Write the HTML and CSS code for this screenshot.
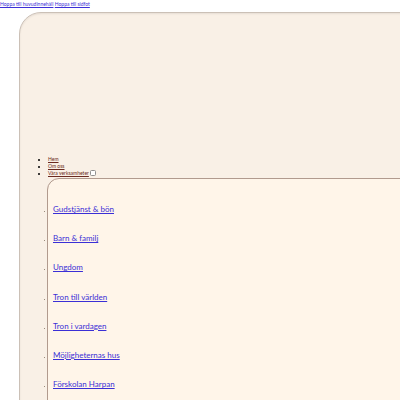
FILE: index.html
```html
<!DOCTYPE html>
<html lang="sv">
<head>
    <meta charset="UTF-8" />
    <meta name="viewport" content="width=device-width, initial-scale=1">
    <title>Församlingen</title>
    <link rel="stylesheet" href="styles.css">
</head>
<body>
<div class="skip">
    <a href="#main">Hoppa till huvudinnehåll</a>
    <a href="#footer">Hoppa till sidfot</a>
</div>
<header class="site-header">
    <nav class="main-nav">
        <ul>
            <li><a href="#">Hem</a></li>
            <li><a href="#">Om oss</a></li>
            <li><a href="#">Våra verksamheter</a><input type="checkbox" class="toggle">
                <ul class="submenu">
                    <li><a href="#">Gudstjänst &amp; bön</a></li>
                    <li><a href="#">Barn &amp; familj</a></li>
                    <li><a href="#">Ungdom</a></li>
                    <li><a href="#">Tron till världen</a></li>
                    <li><a href="#">Tron i vardagen</a></li>
                    <li><a href="#">Möjligheternas hus</a></li>
                    <li><a href="#">Förskolan Harpan</a></li>
                </ul>
            </li>
        </ul>
    </nav>
</header>
</body>
</html>
```

FILE: styles.css
```css
:root {
    --page-bg: #ffffff;
    --header-bg: #f9f0e6;
    --header-border: #cbc0b6;
    --menu-bg: #fff5e9;
    --menu-border: #b19a8e;
    --link: #3b2fd6;
    --nav-link: #6b2a20;
}
* { box-sizing: border-box; }
body {
    margin: 0;
    background: var(--page-bg);
    font-family: 'Lato', 'Noto Sans', sans-serif;
    overflow: hidden;
}
.skip {
    font-size: 5px;
    line-height: 8px;
    height: 12px;
}
.skip a { color: var(--link); }
.site-header {
    margin-left: 19px;
    width: 420px;
    height: 420px;
    background: var(--header-bg);
    border: 1px solid var(--header-border);
    border-radius: 22px 0 0 0;
    box-shadow: inset 0 1px 2px rgba(0, 0, 0, 0.08);
    padding-top: 143px;
}
.main-nav > ul {
    margin: 0;
    padding-left: 28px;
    font-size: 5px;
    line-height: 7px;
}
.main-nav > ul > li > a { color: var(--nav-link); }
.toggle {
    appearance: none;
    width: 6px;
    height: 6px;
    margin: 0 0 0 1px;
    vertical-align: -1px;
    background: #fff;
    border: 1px solid #8f8f8f;
    border-radius: 1.5px;
}
.submenu {
    margin: 1px 0 0 -1px;
    padding: 16px 0 0 5px;
    list-style: disc;
    width: 400px;
    height: 260px;
    background: var(--menu-bg);
    border: 1px solid var(--menu-border);
    border-radius: 12px 0 0 0;
    box-shadow: 0 1px 0 rgba(120, 80, 70, 0.25);
    font-size: 8px;
}
.submenu li {
    height: 29.2px;
    line-height: 29.2px;
    color: #7a6a5a;
}
.submenu li::marker { font-size: 4px; }
.submenu a { color: var(--link); }
```
